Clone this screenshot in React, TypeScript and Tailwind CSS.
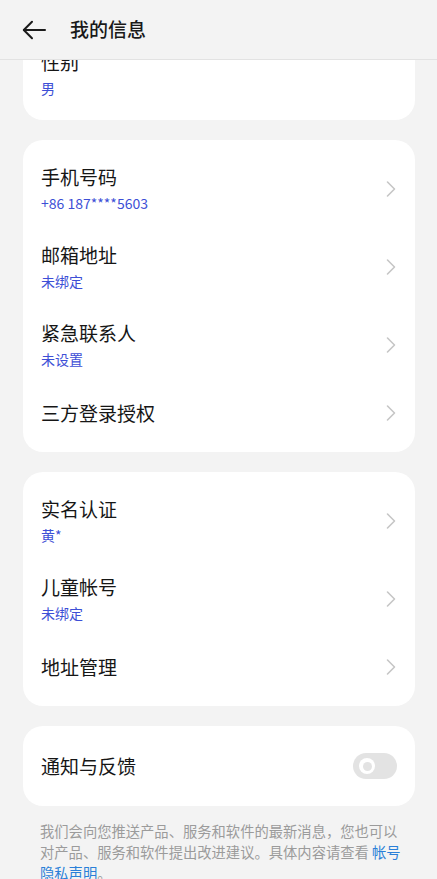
import { ReactNode } from "react";

const font = { fontFamily: '"Noto Sans CJK SC", "Noto Sans", sans-serif' };

function Chevron() {
  return (
    <svg width="12" height="18" viewBox="0 0 12 18" fill="none" className="shrink-0">
      <path d="M2.5 2 L9.5 9 L2.5 16" stroke="#c6c6c6" strokeWidth="1.6" strokeLinecap="round" strokeLinejoin="round" />
    </svg>
  );
}

function Row({ title, sub, arrow = true }: { title: string; sub?: string; arrow?: boolean }) {
  return (
    <div className={`flex h-[78px] items-center justify-between ${sub ? "pt-[20px]" : ""}`}>
      <div className="flex flex-col">
        <div className="text-[19px] leading-[24px] text-[#161616]">{title}</div>
        {sub && <div className="mt-[4px] text-[14px] leading-[20px] text-[#3d4fd6]">{sub}</div>}
      </div>
      {arrow && <Chevron />}
    </div>
  );
}

function Card({ children, className = "" }: { children: ReactNode; className?: string }) {
  return <div className={`rounded-[20px] bg-white pl-[18px] pr-[18px] ${className}`}>{children}</div>;
}

export default function App() {
  return (
    <div style={font} className="flex h-[879px] w-full flex-col overflow-hidden bg-[#f3f3f3]">
      <div className="flex h-[60px] shrink-0 items-center border-b border-[#e2e2e2] bg-[#f3f3f3] pl-[22px]">
        <svg width="24" height="20" viewBox="0 0 24 20" fill="none">
          <path d="M23 10H2" stroke="#1a1a1a" strokeWidth="2" strokeLinecap="round" />
          <path d="M10 1.8 L1.8 10 L10 18.2" stroke="#1a1a1a" strokeWidth="2" strokeLinecap="round" strokeLinejoin="round" />
        </svg>
        <div className="ml-[24px] text-[19px] font-medium text-[#191919]">我的信息</div>
      </div>

      <div className="flex flex-1 flex-col overflow-hidden pl-[23px] pr-[22px]">
        <Card className="mt-[-35px] pb-[17px]">
          <Row title="性别" sub="男" arrow={false} />
        </Card>

        <Card className="mt-[20px]">
          <Row title="手机号码" sub="+86 187****5603" />
          <Row title="邮箱地址" sub="未绑定" />
          <Row title="紧急联系人" sub="未设置" />
          <Row title="三方登录授权" />
        </Card>

        <Card className="mt-[20px]">
          <Row title="实名认证" sub="黄*" />
          <Row title="儿童帐号" sub="未绑定" />
          <Row title="地址管理" />
        </Card>

        <Card className="mt-[20px]">
          <div className="flex h-[80px] items-center justify-between">
            <div className="text-[19px] text-[#161616]">通知与反馈</div>
            <div className="flex h-[26px] w-[44px] items-center rounded-full bg-[#e3e3e3] pl-[6px]">
              <div className="flex h-[16px] w-[16px] items-center justify-center rounded-full bg-white">
                <div className="h-[9px] w-[9px] rounded-full bg-[#e3e3e3]" />
              </div>
            </div>
          </div>
        </Card>

        <p className="mt-[14px] pl-[17px] pr-[9px] text-[14.3px] leading-[21px] text-[#9b9b9b]">
          我们会向您推送产品、服务和软件的最新消息，您也可以对产品、服务和软件提出改进建议。具体内容请查看{" "}
          <span className="text-[#2a7fd8]">帐号隐私声明</span>。
        </p>
      </div>
    </div>
  );
}
